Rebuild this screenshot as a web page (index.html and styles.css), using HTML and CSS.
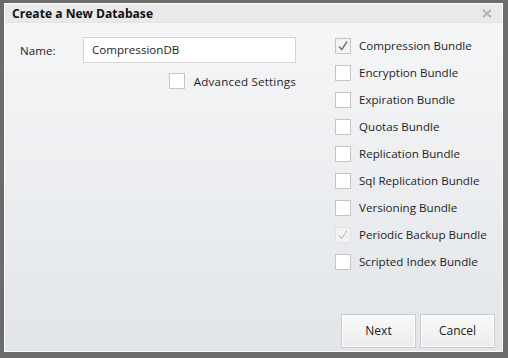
FILE: index.html
```html
<!DOCTYPE html>
<html>
<head>
<meta charset="utf-8">
<link rel="stylesheet" href="styles.css">
</head>
<body>
<div class="dialog">
  <div class="titlebar">
    <span class="title">Create a New Database</span>
    <svg class="close" width="10" height="9" viewBox="0 0 10 9">
      <path d="M1 1 L9 8 M9 1 L1 8" stroke="#d0d0d0" stroke-width="2.6" fill="none"/>
      <path d="M1 1 L9 8 M9 1 L1 8" stroke="#9a9a9a" stroke-width="1" fill="none"/>
    </svg>
  </div>
  <div class="content">
    <div class="left">
      <div class="name-row">
        <label class="name-label">Name:</label>
        <div class="input">CompressionDB</div>
      </div>
      <div class="adv-row">
        <span class="box"></span>
        <span class="text adv-text">Advanced Settings</span>
      </div>
    </div>
    <div class="right">
      <div class="row"><span class="box checked"><svg width="12" height="12" viewBox="0 0 12 12"><path d="M2 6.5 L4.8 9.6 L10 1.5" stroke="#707070" stroke-width="1.4" fill="none"/></svg></span><span class="text">Compression Bundle</span></div>
      <div class="row"><span class="box"></span><span class="text">Encryption Bundle</span></div>
      <div class="row"><span class="box"></span><span class="text">Expiration Bundle</span></div>
      <div class="row"><span class="box"></span><span class="text">Quotas Bundle</span></div>
      <div class="row"><span class="box"></span><span class="text">Replication Bundle</span></div>
      <div class="row"><span class="box"></span><span class="text">Sql Replication Bundle</span></div>
      <div class="row"><span class="box"></span><span class="text">Versioning Bundle</span></div>
      <div class="row"><span class="box disabled"><svg width="12" height="12" viewBox="0 0 12 12"><path d="M2 6.5 L4.8 9.6 L10 1.5" stroke="#c4c4c4" stroke-width="1.2" fill="none"/></svg></span><span class="text">Periodic Backup Bundle</span></div>
      <div class="row"><span class="box"></span><span class="text">Scripted Index Bundle</span></div>
    </div>
  </div>
  <div class="footer">
    <button class="btn">Next</button>
    <button class="btn">Cancel</button>
  </div>
</div>
</body>
</html>
```

FILE: styles.css
```css
html, body {
  margin: 0;
  padding: 0;
  width: 508px;
  height: 358px;
  background: #6b6b6b;
  overflow: hidden;
  font-family: "Open Sans", "DejaVu Sans", sans-serif;
  font-size: 11.6px;
  color: #1e1e1e;
}
.dialog {
  box-sizing: border-box;
  margin: 3px 0 0 4px;
  width: 499px;
  height: 349px;
  border: 1px solid #fbfbfb;
  display: flex;
  flex-direction: column;
  background: linear-gradient(#f6f7f8, #e2e5e9);
}
.titlebar {
  height: 18px;
  background: #e9e9e9;
  border-bottom: 1px solid #e3e3e3;
  display: flex;
  align-items: center;
  justify-content: space-between;
  padding: 0 10px 0 7px;
  flex-shrink: 0;
}
.title {
  font-weight: bold;
  font-size: 12.1px;
  color: #111;
}
.close {
  display: block;
  margin-top: 1px;
}
.content {
  flex: 1;
  display: flex;
  padding: 14px 0 0 15px;
}
.left {
  width: 277px;
  display: flex;
  flex-direction: column;
}
.name-row {
  display: flex;
  align-items: center;
}
.name-label {
  width: 63px;
}
.input {
  box-sizing: border-box;
  width: 213px;
  height: 26px;
  border: 1px solid #d4d4d4;
  background: #fff;
  padding: 0 8px;
  line-height: 24px;
}
.adv-row {
  display: flex;
  align-items: center;
  justify-content: flex-end;
  margin-top: 10px;
  padding-right: 1px;
}
.adv-row .box {
  margin-right: 9px;
}
.adv-text {
  letter-spacing: 0.2px;
}
.box {
  box-sizing: border-box;
  width: 16px;
  height: 16px;
  border: 1px solid #c9c4c4;
  background: #fff;
  display: flex;
  align-items: center;
  justify-content: center;
  flex-shrink: 0;
}
.box.checked {
  background: #f3f3f3;
}
.box.disabled {
  background: #f1f2f3;
  border-color: #e2e2e2;
}
.right {
  margin-left: 38px;
  display: flex;
  flex-direction: column;
}
.row {
  display: flex;
  align-items: center;
  height: 27px;
}
.row:first-child {
  margin-top: -5px;
}
.row .box {
  margin-right: 8px;
}
.footer {
  display: flex;
  justify-content: flex-end;
  gap: 4px;
  padding: 0 7px 3px 0;
}
.btn {
  box-sizing: border-box;
  width: 75px;
  height: 34px;
  border: 1px solid #cccccc;
  background: linear-gradient(#f9f9f9, #ececec);
  box-shadow: inset 0 0 0 1px #ffffff;
  font-family: "Open Sans", "DejaVu Sans", sans-serif;
  font-size: 12px;
  color: #222;
  padding: 0 0 2px 0;
}
```
